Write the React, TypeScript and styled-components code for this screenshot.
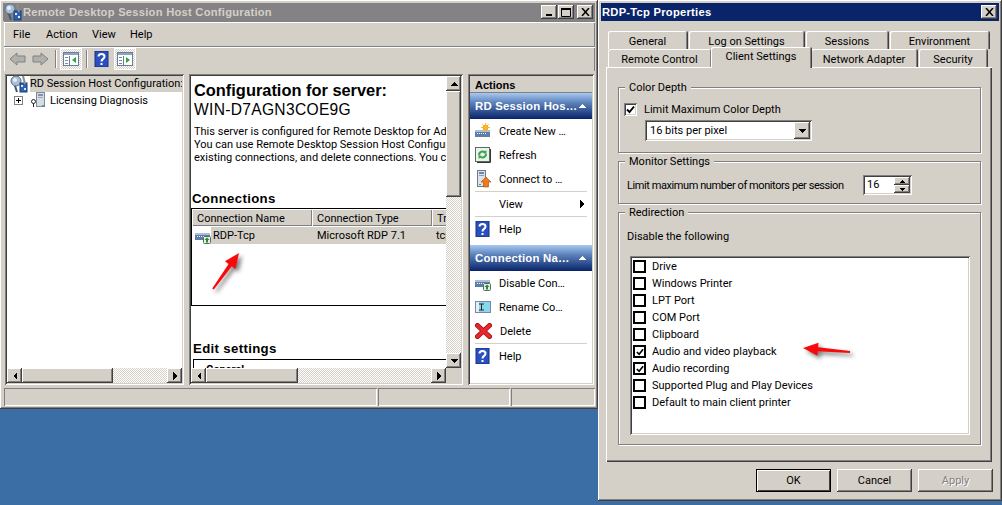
import React from 'react';
import styled, { createGlobalStyle, css } from 'styled-components';

const FACE = '#d4d0c8';

const raised = css`
  box-shadow: inset -1px -1px #404040, inset 1px 1px #fff, inset -2px -2px #808080, inset 2px 2px ${FACE};
`;
const sunken = css`
  box-shadow: inset 1px 1px #808080, inset -1px -1px #fff, inset 2px 2px #404040, inset -2px -2px ${FACE};
`;
const dither = css`
  background: repeating-conic-gradient(${FACE} 0 25%, #fff 0 50%) 0 0 / 2px 2px;
`;

const GlobalStyle = createGlobalStyle`
  html, body { margin: 0; padding: 0; background: #3a6ea5; }
  body { font-family: Roboto, "Liberation Sans", Arial, sans-serif; font-size: 11px; color: #000; }
`;

const Desktop = styled.div`
  display: flex;
  align-items: flex-start;
  width: 1002px;
  height: 505px;
  overflow: hidden;
  background: #3a6ea5;
`;

const Window = styled.div<{ $w: number; $h: number }>`
  width: ${p => p.$w}px;
  height: ${p => p.$h}px;
  flex: none;
  box-sizing: border-box;
  padding: 3px;
  display: flex;
  flex-direction: column;
  background: ${FACE};
  ${raised}
`;

const TitleBar = styled.div<{ $active?: boolean }>`
  height: 18px;
  flex: none;
  display: flex;
  align-items: center;
  gap: 1px;
  padding: 0 2px 0 1px;
  background: ${p => (p.$active ? '#0a246a' : '#848284')};
  color: ${p => (p.$active ? '#fff' : FACE)};
  font-family: "Liberation Sans", Arial, sans-serif;
  font-weight: bold;
  font-size: 11.2px;
  letter-spacing: 0.25px;
`;

const TitleText = styled.span`
  flex: 1;
  white-space: nowrap;
  margin-top: -1px;
`;

const CaptionButton = styled.div<{ $gapLeft?: number }>`
  width: 16px;
  height: 14px;
  flex: none;
  margin-left: ${p => p.$gapLeft ?? 0}px;
  display: flex;
  align-items: center;
  justify-content: center;
  background: ${FACE};
  ${raised}
`;

const BarRow = styled.div<{ $h: number; $pl: number }>`
  height: ${p => p.$h}px;
  flex: none;
  box-sizing: border-box;
  display: flex;
  align-items: center;
  margin: 0 0 0 1px;
  padding-left: ${p => p.$pl}px;
  border-top: 1px solid #808080;
  box-shadow: inset 0 1px #fff, inset 1px 0 #fff, inset -1px 0 #808080;
`;

const MenuItem = styled.span<{ $w: number }>`
  width: ${p => p.$w}px;
  flex: none;
  margin-top: 1px;
`;

const ToolSep = styled.div<{ $l: number; $r: number }>`
  width: 2px;
  height: 18px;
  flex: none;
  margin: 0 ${p => p.$r}px 0 ${p => p.$l}px;
  border-left: 1px solid #808080;
  background: #fff;
  box-sizing: border-box;
`;

const ToggleButton = styled.div`
  width: 22px;
  height: 22px;
  flex: none;
  display: flex;
  align-items: center;
  justify-content: center;
  ${dither}
  box-shadow: inset 1px 1px #fff, inset -1px -1px #fff;
`;

const ToolIcon = styled.div<{ $w: number; $ml?: number }>`
  width: ${p => p.$w}px;
  margin-left: ${p => p.$ml ?? 0}px;
  flex: none;
  display: flex;
  justify-content: center;
`;

const Panes = styled.div`
  height: 311px;
  flex: none;
  display: flex;
  margin-top: 3px;
`;

const Pane = styled.div<{ $w: number; $ml: number }>`
  width: ${p => p.$w}px;
  margin-left: ${p => p.$ml}px;
  flex: none;
  box-sizing: border-box;
  padding: 2px;
  display: flex;
  flex-direction: column;
  background: #fff;
  overflow: hidden;
  ${sunken}
`;

const TreeArea = styled.div`
  flex: 1;
  min-height: 0;
`;

const TreeRow = styled.div`
  display: flex;
  align-items: center;
  height: 16px;
  white-space: nowrap;
`;

const TreeRootLabel = styled.span`
  width: 152px;
  height: 16px;
  line-height: 16px;
  margin-left: 2px;
  background: ${FACE};
  overflow: hidden;
`;

const TreeLabel = styled.span`
  margin-left: 5px;
`;

const Expander = styled.div`
  width: 9px;
  height: 9px;
  margin: 0 8px 0 7px;
  box-sizing: border-box;
  border: 1px solid #808080;
  background: linear-gradient(#000, #000) center / 5px 1px no-repeat, linear-gradient(#000, #000) center / 1px 5px no-repeat, #fff;
`;

const ScrollRow = styled.div`
  height: 15px;
  flex: none;
  display: flex;
  background: ${FACE};
`;

const ScrollButton = styled.div`
  width: 15px;
  height: 15px;
  flex: none;
  display: flex;
  align-items: center;
  justify-content: center;
  background: ${FACE};
  ${raised}
`;

const ScrollThumb = styled.div<{ $size: number; $vertical?: boolean }>`
  flex: none;
  ${p => (p.$vertical ? `height: ${p.$size}px; width: 15px;` : `width: ${p.$size}px; height: 15px;`)}
  background: ${FACE};
  ${raised}
`;

const ScrollTrack = styled.div`
  flex: 1;
  ${dither}
`;

const MainBody = styled.div`
  flex: 1;
  min-height: 0;
  display: flex;
`;

const MainContent = styled.div`
  flex: 1;
  min-width: 0;
  overflow: hidden;
  padding: 4px 0 0 0;
`;

const VScroll = styled.div`
  width: 15px;
  flex: none;
  display: flex;
  flex-direction: column;
`;

const Corner = styled.div`
  width: 15px;
  flex: none;
  background: ${FACE};
`;

const Heading = styled.div`
  font-family: "Liberation Sans", Arial, sans-serif;
  font-weight: bold;
  font-size: 16.4px;
  line-height: 20px;
  margin-left: 3px;
  white-space: nowrap;
`;

const ServerName = styled.div`
  font-family: "Liberation Sans", Arial, sans-serif;
  font-size: 15.6px;
  line-height: 20px;
  margin-left: 3px;
  letter-spacing: 0.3px;
  white-space: nowrap;
`;

const Blurb = styled.div`
  margin: 5px 0 0 3px;
  line-height: 13px;
  white-space: nowrap;
`;

const SectionTitle = styled.div<{ $mt: number; $ml: number }>`
  margin: ${p => p.$mt}px 0 0 ${p => p.$ml}px;
  font-family: "Liberation Sans", Arial, sans-serif;
  font-weight: bold;
  font-size: 13.2px;
  line-height: 16px;
  letter-spacing: 0.35px;
`;

const ConnectionList = styled.div`
  position: relative;
  height: 98px;
  margin-top: 1px;
  box-sizing: border-box;
  border: solid #000;
  border-width: 1px 0 1px 1px;
`;

const ColumnHeaders = styled.div`
  display: flex;
  height: 17px;
`;

const ColumnHeader = styled.div<{ $w: number }>`
  width: ${p => p.$w}px;
  flex: none;
  box-sizing: border-box;
  padding: 3px 0 0 5px;
  line-height: 14px;
  white-space: nowrap;
  overflow: hidden;
  background: ${FACE};
  box-shadow: inset 1px 1px #fff, inset -1px -1px #808080, inset -2px 0 ${FACE};
`;

const ConnectionRow = styled.div`
  display: flex;
  align-items: center;
  height: 17px;
  margin-top: 1px;
  padding-left: 3px;
`;

const RowIcon = styled.div`
  width: 16px;
  height: 16px;
  flex: none;
`;

const RowCell = styled.div<{ $w: number; $pl: number }>`
  width: ${p => p.$w}px;
  flex: none;
  padding-left: ${p => p.$pl}px;
  box-sizing: border-box;
  height: 17px;
  line-height: 17px;
  background: ${FACE};
  white-space: nowrap;
`;

const Callout = styled.svg`
  position: absolute;
  left: 0;
  top: 0;
  overflow: visible;
  pointer-events: none;
`;

const SettingsBox = styled.div`
  margin: 2px 0 0 2px;
  height: 30px;
  border: solid #000;
  border-width: 1px 0 0 1px;
  padding: 3px 0 0 12px;
  font-weight: bold;
  line-height: 14px;
`;

const ActionsTitle = styled.div`
  height: 17px;
  flex: none;
  background: ${FACE};
  font-family: "Liberation Sans", Arial, sans-serif;
  font-weight: bold;
  line-height: 19px;
  padding-left: 5px;
  box-shadow: inset 0 -1px #808080;
`;

const ActionHeader = styled.div`
  height: 26px;
  flex: none;
  display: flex;
  align-items: center;
  justify-content: space-between;
  padding: 0 6px 0 5px;
  color: #fff;
  font-family: "Liberation Sans", Arial, sans-serif;
  font-weight: bold;
  font-size: 11.4px;
  letter-spacing: 0.2px;
  background: linear-gradient(#a8c8f0, #5f86be 35%, #0a246a);
`;

const ActionItem = styled.div`
  height: 24px;
  flex: none;
  display: flex;
  align-items: center;
  padding-left: 5px;
  gap: 8px;
`;

const SubmenuItem = styled(ActionItem)`
  padding: 0 8px 0 29px;
`;

const ActionLabel = styled.span`
  flex: 1;
  white-space: nowrap;
`;

const ActionDivider = styled.div`
  height: 1px;
  flex: none;
  margin: 0 5px;
  background: ${FACE};
`;

const ActionGroup = styled.div<{ $h: number }>`
  height: ${p => p.$h}px;
  flex: none;
  display: flex;
  flex-direction: column;
`;

const StatusBar = styled.div`
  height: 18px;
  flex: none;
  display: flex;
  gap: 1px;
  margin: 3px 0 0 1px;
`;

const StatusCell = styled.div<{ $w?: number }>`
  flex: ${p => (p.$w ? `0 0 ${p.$w}px` : 1)};
  box-shadow: inset 1px 1px #808080, inset -1px -1px #fff;
`;

const DialogBody = styled.div`
  flex: 1;
  display: flex;
  flex-direction: column;
  padding: 10px 7px 0 5px;
`;

const TabRow = styled.div`
  height: 18px;
  flex: none;
  display: flex;
  padding-left: 2px;
  gap: 2px;
  position: relative;
`;

const Tab = styled.div<{ $w: number; $active?: boolean }>`
  width: ${p => p.$w}px;
  flex: none;
  box-sizing: border-box;
  text-align: center;
  background: ${FACE};
  box-shadow: inset 1px 1px #fff, inset -1px 0 #808080, 1px 0 #404040;
  border-radius: 2px 2px 0 0;
  line-height: 21px;
  white-space: nowrap;
  ${p =>
    p.$active &&
    css`
      position: relative;
      z-index: 1;
      height: 21px;
      margin: -2px -2px -1px -2px;
      width: ${p.$w + 4}px;
      line-height: 20px;
    `}
`;

const TabPanel = styled.div`
  height: 395px;
  flex: none;
  box-sizing: border-box;
  padding: 13px 11px 0 12px;
  display: flex;
  flex-direction: column;
  background: ${FACE};
  box-shadow: inset 1px 1px #fff, inset -1px -1px #404040, inset -2px -2px #808080;
`;

const GroupBox = styled.fieldset<{ $h: number; $mt?: number }>`
  height: ${p => p.$h}px;
  flex: none;
  box-sizing: border-box;
  margin: ${p => p.$mt ?? 0}px 0 0 0;
  padding: 0 0 0 8px;
  min-width: 0;
  border: 1px solid #808080;
  box-shadow: 1px 1px #fff, inset 1px 1px #fff;
`;

const GroupLegend = styled.legend`
  margin-left: -2px;
  padding: 0 4px;
  height: 14px;
  line-height: 16px;
  background: ${FACE};
`;

const CheckLine = styled.div`
  display: flex;
  align-items: center;
  gap: 7px;
  margin: 7px 0 0 -3px;
  height: 16px;
`;

const CheckBox = styled.div<{ $thick?: boolean }>`
  width: 13px;
  height: 13px;
  flex: none;
  box-sizing: border-box;
  display: flex;
  align-items: center;
  justify-content: center;
  background: #fff;
  ${p => (p.$thick ? 'border: 2px solid #000;' : sunken)}
`;

const Select = styled.div`
  width: 167px;
  height: 21px;
  margin: 3px 0 0 18px;
  box-sizing: border-box;
  padding: 2px;
  display: flex;
  align-items: center;
  background: #fff;
  ${sunken}
`;

const SelectValue = styled.span`
  flex: 1;
  padding-left: 3px;
`;

const SelectArrow = styled.div`
  width: 16px;
  height: 17px;
  display: flex;
  align-items: center;
  justify-content: center;
  background: ${FACE};
  ${raised}
`;

const MonitorRow = styled.div`
  display: flex;
  align-items: center;
  height: 20px;
  margin-top: 7px;
`;

const MonitorLabel = styled.span`
  width: 236px;
  flex: none;
  white-space: nowrap;
  letter-spacing: -0.42px;
`;

const Spinner = styled.div`
  width: 49px;
  height: 20px;
  box-sizing: border-box;
  padding: 2px;
  display: flex;
  background: #fff;
  ${sunken}
`;

const SpinnerValue = styled.span`
  flex: 1;
  padding-left: 2px;
  line-height: 16px;
`;

const SpinnerArrows = styled.div`
  width: 16px;
  display: flex;
  flex-direction: column;
`;

const SpinnerArrow = styled.div`
  flex: 1;
  display: flex;
  align-items: center;
  justify-content: center;
  background: ${FACE};
  ${raised}
`;

const HintText = styled.div`
  margin-top: 11px;
  line-height: 14px;
`;

const ListBox = styled.div`
  position: relative;
  width: 340px;
  height: 179px;
  margin: 12px 0 0 3px;
  box-sizing: border-box;
  padding: 2px 3px;
  background: #fff;
  ${sunken}
`;

const ListRow = styled.div`
  display: flex;
  align-items: center;
  gap: 6px;
  height: 17px;
  white-space: nowrap;
`;

const ButtonRow = styled.div`
  display: flex;
  justify-content: flex-end;
  gap: 6px;
  margin: 7px -1px 0 0;
`;

const DialogButton = styled.div<{ $default?: boolean; $disabled?: boolean }>`
  width: 75px;
  height: 23px;
  box-sizing: border-box;
  display: flex;
  align-items: center;
  justify-content: center;
  background: ${FACE};
  ${p =>
    p.$default
      ? css`
          border: 1px solid #000;
          box-shadow: inset 1px 1px #fff, inset -1px -1px #404040;
        `
      : raised}
  ${p => p.$disabled && 'color: #808080; text-shadow: 1px 1px #fff;'}
`;

const Triangle = ({ dir, size = 4, color = '#000' }: { dir: 'up' | 'down' | 'left' | 'right'; size?: number; color?: string }) => {
  const s = size;
  const pts = {
    up: `${s},0 ${s * 2},${s} 0,${s}`,
    down: `0,0 ${s * 2},0 ${s},${s}`,
    left: `${s},0 ${s},${s * 2} 0,${s}`,
    right: `0,0 ${s},${s} 0,${s * 2}`,
  }[dir];
  const vertical = dir === 'up' || dir === 'down';
  return (
    <svg width={vertical ? s * 2 : s} height={vertical ? s : s * 2}>
      <polygon points={pts} fill={color} shapeRendering="crispEdges" />
    </svg>
  );
};

const HelpIcon = () => (
  <svg width="16" height="16" viewBox="0 0 16 16">
    <rect x="1" y="0" width="13" height="16" fill="#2a4fc0" />
    <rect x="1" y="0" width="13" height="16" fill="none" stroke="#17307e" />
    <path d="M4.5 5.5 C4.5 2 10.5 2 10.5 5.5 C10.5 8 7.5 7.8 7.5 10.5" fill="none" stroke="#fff" strokeWidth="2" />
    <rect x="6.5" y="12" width="2" height="2" fill="#fff" />
  </svg>
);

const PaneToggleIcon = ({ flip }: { flip?: boolean }) => (
  <svg width="16" height="14" viewBox="0 0 16 14">
    <rect x="0.5" y="0.5" width="15" height="13" fill="#fff" stroke="#6a7f94" />
    <rect x="1" y="1" width="14" height="2" fill="#8fa5bb" />
    <rect x="2" y="5" width="3" height="1" fill="#6a8fb0" />
    <rect x="2" y="8" width="3" height="1" fill="#6a8fb0" />
    <rect x="2" y="11" width="3" height="1" fill="#6a8fb0" />
    <rect x="6" y="4" width="1" height="9" fill="#6a7f94" />
    <polygon points={flip ? '9,5 13,8 9,11' : '13,5 9,8 13,11'} fill="#2ea53a" />
  </svg>
);

const NavArrow = ({ right }: { right?: boolean }) => (
  <svg width="17" height="14" viewBox="0 0 17 14">
    <polygon
      points="1,7 8,1 8,4 16,4 16,10 8,10 8,13"
      fill="#b0b0ac"
      stroke="#808080"
      transform={right ? 'matrix(-1 0 0 1 17 0)' : undefined}
    />
  </svg>
);

const NetCard = () => (
  <g>
    <rect x="0" y="5" width="15" height="7" fill="#5c7ea8" />
    <rect x="0" y="5" width="15" height="2" fill="#a9c0d8" />
    <rect x="2" y="8" width="1" height="1" fill="#fff" />
    <rect x="4" y="8" width="1" height="1" fill="#fff" />
    <rect x="6" y="8" width="1" height="1" fill="#fff" />
    <rect x="8" y="8" width="1" height="1" fill="#fff" />
    <rect x="10" y="8" width="1" height="1" fill="#fff" />
  </g>
);

const NetAdapterIcon = () => (
  <svg width="16" height="16" viewBox="0 0 16 16">
    <NetCard />
    <rect x="8.5" y="8.5" width="7" height="7" rx="1" fill="#e8efe6" stroke="#5b6b63" />
    <polygon points="12,9.5 14.5,12 13,12 13,14.5 11,14.5 11,12 9.5,12" fill="#1f8f2c" />
  </svg>
);

const CreateIcon = () => (
  <svg width="16" height="16" viewBox="0 0 16 16">
    <g transform="translate(0 2)">
      <NetCard />
    </g>
    <circle cx="10.5" cy="4.5" r="2.8" fill="#f7a11a" />
    <path d="M10.5 0v9M6 4.5h9M7.3 1.3l6.4 6.4M13.7 1.3L7.3 7.7" stroke="#f7b733" strokeWidth="1" />
  </svg>
);

const RefreshIcon = () => (
  <svg width="16" height="16" viewBox="0 0 16 16">
    <rect x="0.5" y="0.5" width="14" height="14" fill="#eef2ee" stroke="#5e6b63" />
    <path d="M15.5 2v13.5H2" fill="none" stroke="#2e3a33" />
    <path d="M4 8a3.6 3.6 0 0 1 6.2-2.4M11 7a3.6 3.6 0 0 1-6.2 2.4" fill="none" stroke="#39a84a" strokeWidth="2" />
    <polygon points="11.5,3 11.5,7 8,6" fill="#39a84a" />
    <polygon points="3.5,12 3.5,8 7,9" fill="#39a84a" />
  </svg>
);

const ConnectIcon = () => (
  <svg width="16" height="18" viewBox="0 0 16 18">
    <rect x="2.5" y="0.5" width="8" height="16" fill="#dde3ea" stroke="#6d7b8c" />
    <rect x="4" y="2" width="5" height="2" fill="#6d87a5" />
    <rect x="4" y="5" width="5" height="1" fill="#8b9bb0" />
    <rect x="4" y="14" width="2" height="1" fill="#35b04a" />
    <polygon points="11,7 16,12 13.5,12 13.5,17 8.5,17 8.5,12 6,12" fill="#ef7a1a" stroke="#a84708" strokeWidth="0.6" />
  </svg>
);

const RenameIcon = () => (
  <svg width="16" height="16" viewBox="0 0 16 16">
    <rect x="0.5" y="2.5" width="15" height="11" fill="#87d7ee" stroke="#7b86a8" />
    <rect x="1" y="3" width="3" height="10" fill="#e7edf4" />
    <path d="M4 5h5M4 11h5M6.5 5v6" stroke="#2b2b2b" fill="none" />
  </svg>
);

const DeleteIcon = () => (
  <svg width="17" height="16" viewBox="0 0 17 16">
    <path d="M2.5 2.5L14.5 13.5M14.5 2.5L2.5 13.5" stroke="#9c1212" strokeWidth="5" strokeLinecap="round" />
    <path d="M2.5 2.5L14.5 13.5M14.5 2.5L2.5 13.5" stroke="#e8262c" strokeWidth="3.4" strokeLinecap="round" />
  </svg>
);

const SessionHostIcon = () => (
  <svg width="18" height="18" viewBox="0 0 18 18">
    <circle cx="6" cy="6" r="5" fill="#a9bfd6" stroke="#5a6f86" />
    <circle cx="5" cy="5" r="2" fill="#e6eef6" />
    <path d="M5 11l2 6" stroke="#44586e" strokeWidth="2" />
    <rect x="10" y="8" width="7" height="9" fill="#2d62b5" stroke="#1c3f7a" />
    <rect x="11" y="10" width="2" height="2" fill="#dfe9f5" />
    <rect x="14" y="13" width="2" height="2" fill="#dfe9f5" />
    <path d="M13 1l2 8" stroke="#8e8e8e" strokeWidth="2" />
  </svg>
);

const LicensingIcon = () => (
  <svg width="14" height="16" viewBox="0 0 14 16">
    <rect x="5.5" y="0.5" width="8" height="14" fill="#d6dce3" stroke="#7d8a99" />
    <rect x="7" y="2" width="5" height="2" fill="#7d94ad" />
    <rect x="7" y="5" width="5" height="1" fill="#9aa8b8" />
    <rect x="11" y="13" width="2" height="1" fill="#35b04a" />
    <circle cx="2.5" cy="9.5" r="2" fill="#fff" stroke="#222" />
    <path d="M2.5 11.5V15" stroke="#222" />
  </svg>
);

const CheckMark = ({ small }: { small?: boolean }) => (
  <svg width={small ? 8 : 9} height={small ? 8 : 9} viewBox="0 0 9 9">
    <path d="M1 4.5L3.5 7L8 1.5" fill="none" stroke="#000" strokeWidth="1.9" />
  </svg>
);

const redirections: [string, boolean][] = [
  ['Drive', false],
  ['Windows Printer', false],
  ['LPT Port', false],
  ['COM Port', false],
  ['Clipboard', false],
  ['Audio and video playback', true],
  ['Audio recording', true],
  ['Supported Plug and Play Devices', false],
  ['Default to main client printer', false],
];

const RedArrow = ({ id, x1, y1, x2, y2 }: { id: string; x1: number; y1: number; x2: number; y2: number }) => {
  const a = Math.atan2(y2 - y1, x2 - x1);
  const bx = x2 - Math.cos(a) * 15;
  const by = y2 - Math.sin(a) * 15;
  const nx = -Math.sin(a);
  const ny = Math.cos(a);
  const at = (x: number, y: number, w: number) => `${x + nx * w},${y + ny * w}`;
  const points = [
    `${x2},${y2}`,
    at(bx, by, 6.5),
    at(bx, by, 2),
    at(x1, y1, 1),
    at(x1, y1, -1),
    at(bx, by, -2),
    at(bx, by, -6.5),
  ].join(' ');
  return (
    <Callout width="60" height="40">
      <defs>
        <filter id={id} x="-40%" y="-40%" width="180%" height="180%">
          <feGaussianBlur stdDeviation="2" />
        </filter>
      </defs>
      <polygon points={points} fill="#444" opacity="0.7" transform="translate(3 3)" filter={`url(#${id})`} />
      <polygon points={points} fill="#f80a0a" />
    </Callout>
  );
};

export default function App() {
  return (
    <>
      <GlobalStyle />
      <Desktop>
        <Window $w={598} $h={409}>
          <TitleBar>
            <SessionHostIcon />
            <TitleText>Remote Desktop Session Host Configuration</TitleText>
            <CaptionButton>
              <svg width="8" height="8"><rect x="1" y="6" width="6" height="2" fill="#000" /></svg>
            </CaptionButton>
            <CaptionButton>
              <svg width="10" height="9"><path d="M.5 1.5h9v7h-9z" fill="none" stroke="#000" /><rect y="0" width="10" height="2" fill="#000" /></svg>
            </CaptionButton>
            <CaptionButton $gapLeft={2}>
              <svg width="9" height="8"><path d="M1 0l7 8M8 0L1 8" stroke="#000" strokeWidth="1.5" /></svg>
            </CaptionButton>
          </TitleBar>
          <BarRow $h={25} $pl={9}>
            <MenuItem $w={33}>File</MenuItem>
            <MenuItem $w={46}>Action</MenuItem>
            <MenuItem $w={38}>View</MenuItem>
            <MenuItem $w={30}>Help</MenuItem>
          </BarRow>
          <BarRow $h={25} $pl={5}>
            <NavArrow />
            <ToolIcon $w={17} $ml={6}><NavArrow right /></ToolIcon>
            <ToolSep $l={6} $r={3} />
            <ToggleButton><PaneToggleIcon /></ToggleButton>
            <ToolSep $l={4} $r={1} />
            <ToolIcon $w={16} $ml={5}><HelpIcon /></ToolIcon>
            <ToolIcon $w={22} $ml={4}><ToggleButton><PaneToggleIcon flip /></ToggleButton></ToolIcon>
          </BarRow>
          <Panes>
            <Pane $w={179} $ml={2}>
              <TreeArea>
                <TreeRow>
                  <ToolIcon $w={18} $ml={3}><SessionHostIcon /></ToolIcon>
                  <TreeRootLabel>RD Session Host Configuration:</TreeRootLabel>
                </TreeRow>
                <TreeRow>
                  <Expander />
                  <LicensingIcon />
                  <TreeLabel>Licensing Diagnosis</TreeLabel>
                </TreeRow>
              </TreeArea>
              <ScrollRow>
                <ScrollButton><Triangle dir="left" /></ScrollButton>
                <ScrollThumb $size={91} />
                <ScrollTrack />
                <ScrollButton><Triangle dir="right" /></ScrollButton>
              </ScrollRow>
            </Pane>
            <Pane $w={274} $ml={5}>
              <MainBody>
                <MainContent>
                  <Heading>Configuration for server:</Heading>
                  <ServerName>WIN-D7AGN3COE9G</ServerName>
                  <Blurb>
                    This server is configured for Remote Desktop for Administration<br />
                    You can use Remote Desktop Session Host Configuration to create<br />
                    existing connections, and delete connections. You can also configure
                  </Blurb>
                  <SectionTitle $mt={27} $ml={1}>Connections</SectionTitle>
                  <ConnectionList>
                    <ColumnHeaders>
                      <ColumnHeader $w={120}>Connection Name</ColumnHeader>
                      <ColumnHeader $w={120}>Connection Type</ColumnHeader>
                      <ColumnHeader $w={40}>Transport</ColumnHeader>
                    </ColumnHeaders>
                    <ConnectionRow>
                      <RowIcon><NetAdapterIcon /></RowIcon>
                      <RowCell $w={105} $pl={2}>RDP-Tcp</RowCell>
                      <RowCell $w={120} $pl={1}>Microsoft RDP 7.1</RowCell>
                      <RowCell $w={40} $pl={0}>tcp</RowCell>
                    </ConnectionRow>
                    <RedArrow id="arrow-list" x1={21} y1={80} x2={47} y2={44} />
                  </ConnectionList>
                  <SectionTitle $mt={35} $ml={2}>Edit settings</SectionTitle>
                  <SettingsBox>General</SettingsBox>
                </MainContent>
                <VScroll>
                  <ScrollButton><Triangle dir="up" /></ScrollButton>
                  <ScrollThumb $size={106} $vertical />
                  <ScrollTrack />
                  <ScrollButton><Triangle dir="down" /></ScrollButton>
                </VScroll>
              </MainBody>
              <ScrollRow>
                <ScrollButton><Triangle dir="left" /></ScrollButton>
                <ScrollThumb $size={92} />
                <ScrollTrack />
                <ScrollButton><Triangle dir="right" /></ScrollButton>
                <Corner />
              </ScrollRow>
            </Pane>
            <Pane $w={126} $ml={5}>
              <ActionsTitle>Actions</ActionsTitle>
              <ActionGroup $h={152}>
                <ActionHeader>RD Session Hos… <Triangle dir="up" color="#fff" /></ActionHeader>
                <ActionItem><CreateIcon /><ActionLabel>Create New …</ActionLabel></ActionItem>
                <ActionItem><RefreshIcon /><ActionLabel>Refresh</ActionLabel></ActionItem>
                <ActionItem><ConnectIcon /><ActionLabel>Connect to …</ActionLabel></ActionItem>
                <ActionDivider />
                <SubmenuItem>
                  <ActionLabel>View</ActionLabel>
                  <Triangle dir="right" />
                </SubmenuItem>
                <ActionDivider />
                <ActionItem><HelpIcon /><ActionLabel>Help</ActionLabel></ActionItem>
              </ActionGroup>
              <ActionHeader>Connection Na… <Triangle dir="up" color="#fff" /></ActionHeader>
              <ActionItem><NetAdapterIcon /><ActionLabel>Disable Con…</ActionLabel></ActionItem>
              <ActionItem><RenameIcon /><ActionLabel>Rename Co…</ActionLabel></ActionItem>
              <ActionItem><DeleteIcon /><ActionLabel>Delete</ActionLabel></ActionItem>
              <ActionDivider />
              <ActionItem><HelpIcon /><ActionLabel>Help</ActionLabel></ActionItem>
            </Pane>
          </Panes>
          <StatusBar>
            <StatusCell $w={373} />
            <StatusCell $w={132} />
            <StatusCell />
          </StatusBar>
        </Window>

        <Window $w={404} $h={501}>
          <TitleBar $active>
            <TitleText>RDP-Tcp Properties</TitleText>
            <CaptionButton>
              <svg width="9" height="8"><path d="M1 0l7 8M8 0L1 8" stroke="#000" strokeWidth="1.5" /></svg>
            </CaptionButton>
          </TitleBar>
          <DialogBody>
            <TabRow>
              <Tab $w={79}>General</Tab>
              <Tab $w={115}>Log on Settings</Tab>
              <Tab $w={82}>Sessions</Tab>
              <Tab $w={99}>Environment</Tab>
            </TabRow>
            <TabRow>
              <Tab $w={103}>Remote Control</Tab>
              <Tab $w={96} $active>Client Settings</Tab>
              <Tab $w={106}>Network Adapter</Tab>
              <Tab $w={68}>Security</Tab>
            </TabRow>
            <TabPanel>
              <GroupBox $h={73}>
                <GroupLegend>Color Depth</GroupLegend>
                <CheckLine>
                  <CheckBox><CheckMark /></CheckBox>
                  <span>Limit Maximum Color Depth</span>
                </CheckLine>
                <Select>
                  <SelectValue>16 bits per pixel</SelectValue>
                  <SelectArrow><Triangle dir="down" /></SelectArrow>
                </Select>
              </GroupBox>
              <GroupBox $h={50} $mt={1}>
                <GroupLegend>Monitor Settings</GroupLegend>
                <MonitorRow>
                  <MonitorLabel>Limit maximum number of monitors per session</MonitorLabel>
                  <Spinner>
                    <SpinnerValue>16</SpinnerValue>
                    <SpinnerArrows>
                      <SpinnerArrow><Triangle dir="up" size={3} /></SpinnerArrow>
                      <SpinnerArrow><Triangle dir="down" size={3} /></SpinnerArrow>
                    </SpinnerArrows>
                  </Spinner>
                </MonitorRow>
              </GroupBox>
              <GroupBox $h={240} $mt={1}>
                <GroupLegend>Redirection</GroupLegend>
                <HintText>Disable the following</HintText>
                <ListBox>
                  {redirections.map(([label, on]) => (
                    <ListRow key={label}>
                      <CheckBox $thick>{on && <CheckMark small />}</CheckBox>
                      <span>{label}</span>
                    </ListRow>
                  ))}
                  <RedArrow id="arrow-redirect" x1={220} y1={96} x2={173} y2={92} />
                </ListBox>
              </GroupBox>
            </TabPanel>
            <ButtonRow>
              <DialogButton $default>OK</DialogButton>
              <DialogButton>Cancel</DialogButton>
              <DialogButton $disabled>Apply</DialogButton>
            </ButtonRow>
          </DialogBody>
        </Window>
      </Desktop>
    </>
  );
}
